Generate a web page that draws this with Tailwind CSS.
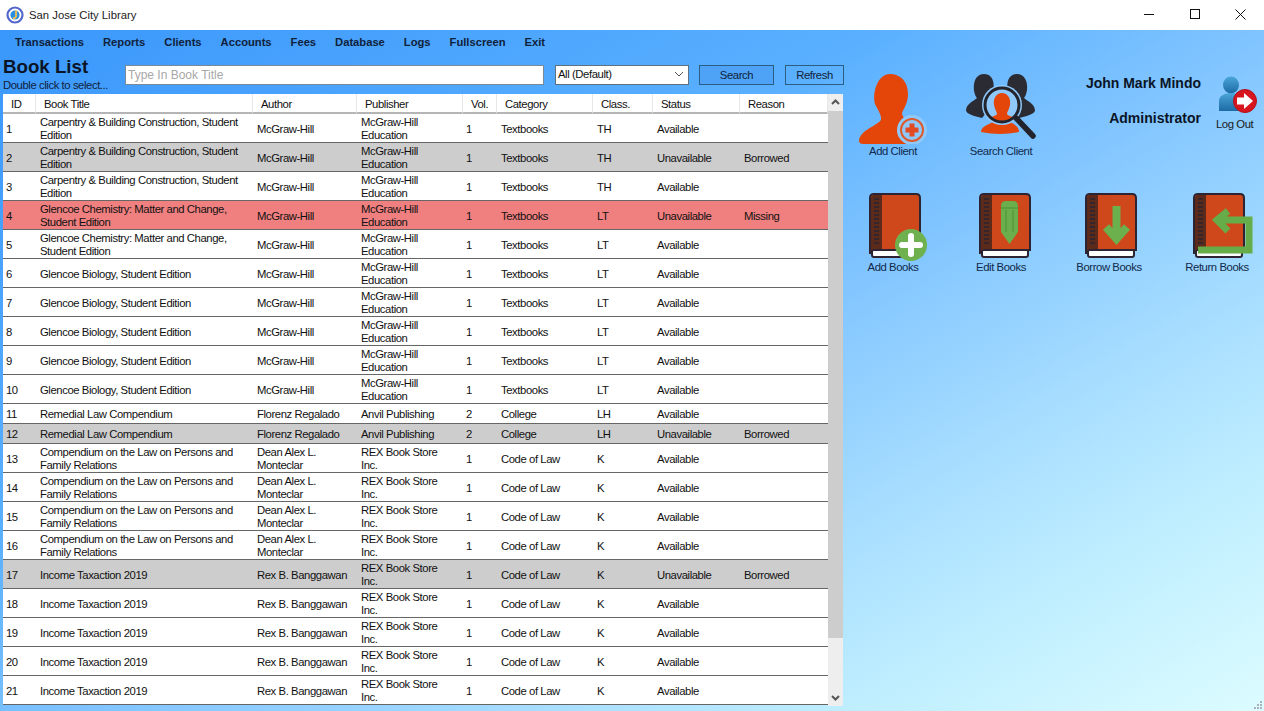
<!DOCTYPE html>
<html lang="en">
<head>
    <meta charset="UTF-8">
    <title>San Jose City Library</title>
    <script src="https://cdn.jsdelivr.net/npm/@tailwindcss/browser@4"></script>
</head>
<body class="w-[1264px] h-[711px] overflow-hidden font-['Liberation_Sans',Arial,sans-serif] text-[11.3px] tracking-[-0.42px] text-[#111]">
    <!-- shared book shape -->
    <svg class="hidden">
        <symbol id="book" viewBox="0 0 52 66" overflow="visible">
            <rect x="3" y="54" width="46" height="10" rx="2" fill="#fff" stroke="#2d2433" stroke-width="2"/>
            <path d="M5 1H47Q51 1 51 5V57H5Q1 57 1 61V5Q1 1 5 1Z" fill="#cf481c" stroke="#2d2433" stroke-width="2"/>
            <path d="M5 2H13V56H5Q2 56 2 59V5Q2 2 5 2Z" fill="#5b2a1b"/>
            <path d="M5 6H10M5 10H10M5 14H10M5 18H10M5 22H10M5 26H10M5 30H10M5 34H10M5 38H10M5 42H10M5 46H10M5 50H10" stroke="#2d2433" stroke-width="1.6"/>
        </symbol>
    </svg>

    <!-- Title bar -->
    <div class="h-[30px] bg-white flex items-center">
        <svg width="18" height="18" viewBox="0 0 18 18" class="ml-[6px]">
            <circle cx="9" cy="9" r="7.5" fill="#fff" stroke="#5566cc" stroke-width="2.2"/>
            <circle cx="9" cy="9" r="4.6" fill="#2a8fe0"/>
            <path d="M10 4.5V10.5Q9.5 12.5 7 12" fill="none" stroke="#f2c14e" stroke-width="1.8"/>
        </svg>
        <span class="ml-[5px] text-[11.3px] tracking-normal text-[#222]">San Jose City Library</span>
        <div class="ml-auto flex items-center">
            <svg width="46" height="30" viewBox="0 0 46 30"><path d="M21 14.5H31" stroke="#111"/></svg>
            <svg width="46" height="30" viewBox="0 0 46 30"><rect x="21.5" y="9.500" width="9" height="9" fill="none" stroke="#111"/></svg>
            <svg width="46" height="30" viewBox="0 0 46 30" class="mr-[3px]"><path d="M20.5 9.5L30.5 19.5M30.5 9.5L20.5 19.5" stroke="#111"/></svg>
        </div>
    </div>

    <!-- Main form -->
    <div class="relative h-[681px] bg-[linear-gradient(150deg,#3a97fb_0%,#5ab0ff_36%,#80c4ff_52%,#a5dcff_69%,#bfeeff_83%,#dcfcff_100%)]">
        <!-- Menu -->
        <nav class="h-[24px] pl-[15px] flex items-center gap-[19px] font-bold text-[11.2px] tracking-normal text-[#10213a]">
            <span>Transactions</span>
            <span>Reports</span>
            <span>Clients</span>
            <span>Accounts</span>
            <span>Fees</span>
            <span>Database</span>
            <span>Logs</span>
            <span>Fullscreen</span>
            <span>Exit</span>
        </nav>

        <div class="flex">
            <!-- Left: book list -->
            <div class="w-[844px] shrink-0">
                <div class="h-[40px] flex pl-[3px]">
                    <div class="w-[122px] shrink-0">
                        <h1 class="text-[18.7px] tracking-normal leading-[23px] mt-[1px] font-bold text-[#0a1426]">Book List</h1>
                        <p class="leading-[13px] mt-[1px] text-[#10213a] whitespace-nowrap">Double click to select...</p>
                    </div>
                    <input type="text" placeholder="Type In Book Title" class="mt-[11px] w-[419px] h-[20px] bg-white border border-[#7a8a99] px-[2px] text-[12px] tracking-normal placeholder:text-[#a8a8a8]">
                    <div class="mt-[11px] ml-[11px] w-[134px] h-[20px] bg-white border border-[#5f7080] pl-[2px] pr-[4px] pb-[2px] flex items-center justify-between">
                        <span>All (Default)</span>
                        <svg width="10" height="6" viewBox="0 0 10 6"><path d="M1 1L5 5L9 1" fill="none" stroke="#555"/></svg>
                    </div>
                    <button class="mt-[11px] ml-[10px] w-[75px] h-[20px] bg-[#4ea3f7] border border-[#2c5d85] text-[#10213a]">Search</button>
                    <button class="mt-[11px] ml-[11px] w-[59px] h-[20px] border border-[#2c5d85] text-[#10213a]">Refresh</button>
                </div>

                <div class="flex h-[612px] pl-[3px]">
                    <table class="w-[825px] h-fit table-fixed border-separate border-spacing-0 bg-white leading-[13px] [&_td]:pl-1 [&_td]:pt-px [&_td:not(:has(br))]:pt-[3px] [&_td]:border-b [&_td]:border-[#666] [&_th]:font-normal [&_th]:text-left [&_th]:pt-[2px] [&_th]:border-b-2 [&_th]:border-[#b5b5b5] [&_th]:border-r [&_th]:border-r-[#e8e8e8] [&_th]:pl-2 [&_tbody_tr]:h-[29px]">
                        <colgroup>
                            <col class="w-[33px]"><col class="w-[217px]"><col class="w-[104px]"><col class="w-[106px]"><col class="w-[34px]"><col class="w-[96px]"><col class="w-[60px]"><col class="w-[87px]"><col class="w-[88px]">
                        </colgroup>
                        <thead>
                            <tr class="h-[20px]">
                                <th>ID</th><th>Book Title</th><th>Author</th><th>Publisher</th><th>Vol.</th><th>Category</th><th>Class.</th><th>Status</th><th>Reason</th>
                            </tr>
                        </thead>
                        <tbody class="[&_td:nth-child(1)]:pl-[3px] [&_td:nth-child(5)]:pl-[3px]">
                            <tr><td>1</td><td>Carpentry &amp; Building Construction, Student<br>Edition</td><td>McGraw-Hill</td><td>McGraw-Hill<br>Education</td><td>1</td><td>Textbooks</td><td>TH</td><td>Available</td><td></td></tr>
                            <tr class="bg-[#cdcdcd]"><td>2</td><td>Carpentry &amp; Building Construction, Student<br>Edition</td><td>McGraw-Hill</td><td>McGraw-Hill<br>Education</td><td>1</td><td>Textbooks</td><td>TH</td><td>Unavailable</td><td>Borrowed</td></tr>
                            <tr><td>3</td><td>Carpentry &amp; Building Construction, Student<br>Edition</td><td>McGraw-Hill</td><td>McGraw-Hill<br>Education</td><td>1</td><td>Textbooks</td><td>TH</td><td>Available</td><td></td></tr>
                            <tr class="bg-[#f08080]"><td>4</td><td>Glencoe Chemistry: Matter and Change,<br>Student Edition</td><td>McGraw-Hill</td><td>McGraw-Hill<br>Education</td><td>1</td><td>Textbooks</td><td>LT</td><td>Unavailable</td><td>Missing</td></tr>
                            <tr><td>5</td><td>Glencoe Chemistry: Matter and Change,<br>Student Edition</td><td>McGraw-Hill</td><td>McGraw-Hill<br>Education</td><td>1</td><td>Textbooks</td><td>LT</td><td>Available</td><td></td></tr>
                            <tr><td>6</td><td>Glencoe Biology, Student Edition</td><td>McGraw-Hill</td><td>McGraw-Hill<br>Education</td><td>1</td><td>Textbooks</td><td>LT</td><td>Available</td><td></td></tr>
                            <tr><td>7</td><td>Glencoe Biology, Student Edition</td><td>McGraw-Hill</td><td>McGraw-Hill<br>Education</td><td>1</td><td>Textbooks</td><td>LT</td><td>Available</td><td></td></tr>
                            <tr><td>8</td><td>Glencoe Biology, Student Edition</td><td>McGraw-Hill</td><td>McGraw-Hill<br>Education</td><td>1</td><td>Textbooks</td><td>LT</td><td>Available</td><td></td></tr>
                            <tr><td>9</td><td>Glencoe Biology, Student Edition</td><td>McGraw-Hill</td><td>McGraw-Hill<br>Education</td><td>1</td><td>Textbooks</td><td>LT</td><td>Available</td><td></td></tr>
                            <tr><td>10</td><td>Glencoe Biology, Student Edition</td><td>McGraw-Hill</td><td>McGraw-Hill<br>Education</td><td>1</td><td>Textbooks</td><td>LT</td><td>Available</td><td></td></tr>
                            <tr class="!h-[20px] [&_td]:!pt-px"><td>11</td><td>Remedial Law Compendium</td><td>Florenz Regalado</td><td>Anvil Publishing</td><td>2</td><td>College</td><td>LH</td><td>Available</td><td></td></tr>
                            <tr class="!h-[20px] [&_td]:!pt-px bg-[#cdcdcd]"><td>12</td><td>Remedial Law Compendium</td><td>Florenz Regalado</td><td>Anvil Publishing</td><td>2</td><td>College</td><td>LH</td><td>Unavailable</td><td>Borrowed</td></tr>
                            <tr><td>13</td><td>Compendium on the Law on Persons and<br>Family Relations</td><td>Dean Alex L.<br>Monteclar</td><td>REX Book Store<br>Inc.</td><td>1</td><td>Code of Law</td><td>K</td><td>Available</td><td></td></tr>
                            <tr><td>14</td><td>Compendium on the Law on Persons and<br>Family Relations</td><td>Dean Alex L.<br>Monteclar</td><td>REX Book Store<br>Inc.</td><td>1</td><td>Code of Law</td><td>K</td><td>Available</td><td></td></tr>
                            <tr><td>15</td><td>Compendium on the Law on Persons and<br>Family Relations</td><td>Dean Alex L.<br>Monteclar</td><td>REX Book Store<br>Inc.</td><td>1</td><td>Code of Law</td><td>K</td><td>Available</td><td></td></tr>
                            <tr><td>16</td><td>Compendium on the Law on Persons and<br>Family Relations</td><td>Dean Alex L.<br>Monteclar</td><td>REX Book Store<br>Inc.</td><td>1</td><td>Code of Law</td><td>K</td><td>Available</td><td></td></tr>
                            <tr class="bg-[#cdcdcd]"><td>17</td><td>Income Taxaction 2019</td><td>Rex B. Banggawan</td><td>REX Book Store<br>Inc.</td><td>1</td><td>Code of Law</td><td>K</td><td>Unavailable</td><td>Borrowed</td></tr>
                            <tr><td>18</td><td>Income Taxaction 2019</td><td>Rex B. Banggawan</td><td>REX Book Store<br>Inc.</td><td>1</td><td>Code of Law</td><td>K</td><td>Available</td><td></td></tr>
                            <tr><td>19</td><td>Income Taxaction 2019</td><td>Rex B. Banggawan</td><td>REX Book Store<br>Inc.</td><td>1</td><td>Code of Law</td><td>K</td><td>Available</td><td></td></tr>
                            <tr><td>20</td><td>Income Taxaction 2019</td><td>Rex B. Banggawan</td><td>REX Book Store<br>Inc.</td><td>1</td><td>Code of Law</td><td>K</td><td>Available</td><td></td></tr>
                            <tr><td>21</td><td>Income Taxaction 2019</td><td>Rex B. Banggawan</td><td>REX Book Store<br>Inc.</td><td>1</td><td>Code of Law</td><td>K</td><td>Available</td><td></td></tr>
                        </tbody>
                    </table>
                    <!-- Scrollbar -->
                    <div class="w-[15px] h-[612px] bg-[#eeeeee] flex flex-col items-center">
                        <svg width="15" height="17" viewBox="0 0 15 17"><path d="M4 10L7.5 6.5L11 10" fill="none" stroke="#555" stroke-width="2"/></svg>
                        <div class="w-full h-[527px] bg-[#cdcdcd]"></div>
                        <svg width="15" height="17" viewBox="0 0 15 17" class="mt-auto"><path d="M4 7L7.5 10.5L11 7" fill="none" stroke="#555" stroke-width="2"/></svg>
                    </div>
                </div>
            </div>

            <!-- Right: actions -->
            <div class="flex-1 pl-[3px] text-[#10294a] text-center">
                <div class="flex gap-4 pt-[18px]">
                    <div class="w-[92px] flex flex-col items-center">
                        <svg width="72" height="72" viewBox="0 0 72 72">
                            <path d="M33 2C44 2 51 10 51 22C51 31 47 36 45 41C45 47 52 49 60 53L60 72H6C2 72 1 69 3 65C7 57 19 54 24 48C25 44 21 38 18 32C15 20 21 2 33 2Z" fill="#e4460a"/>
                            <circle cx="55" cy="58" r="15" fill="#8fc9fb"/>
                            <circle cx="55" cy="58" r="11" fill="none" stroke="#dd5a2c" stroke-width="2"/>
                            <path d="M55 51.5V64.5M48.500 58H61.500" stroke="#e24a22" stroke-width="5"/>
                        </svg>
                        <span class="leading-[13px] mt-[1px]">Add Client</span>
                    </div>
                    <div class="w-[92px] flex flex-col items-center">
                        <svg width="74" height="72" viewBox="0 0 74 72">
                            <path d="M2 38C3 31 10 29 13 26C8 20 8 2 20 2C32 2 31 18 27 26L31 30L18 46C10 44 2 42 2 38Z" fill="#2b2b33"/>
                            <path d="M71 38C70 31 63 29 60 26C65 20 65 2 53 2C41 2 42 18 46 26L42 30L55 46C63 44 71 42 71 38Z" fill="#2b2b33"/>
                            <path d="M17 60C17 53 28 52 32 48H44C48 52 55 53 55 60Q36 64 17 60Z" fill="#e4460a"/>
                            <circle cx="38" cy="33" r="20" fill="#8fc9fb"/>
                            <path d="M38 21C44 21 47 27 46 33C45 38 43 40 43 42C45 45 49 44 51 46Q38 52 25 46C27 44 31 45 33 42C33 40 31 38 30 33C29 27 32 21 38 21Z" fill="#e4460a"/>
                            <circle cx="38" cy="33" r="17" fill="none" stroke="#23232b" stroke-width="3"/>
                            <path d="M52 46L69 64" stroke="#23232b" stroke-width="5.500" stroke-linecap="round"/>
                        </svg>
                        <span class="leading-[13px] mt-[1px]">Search Client</span>
                    </div>
                    <div class="w-[138px] shrink-0 text-right font-bold tracking-normal text-[#0a1426] text-[14px] leading-[16px] pt-[3px] whitespace-nowrap">
                        <p>John Mark Mindo</p>
                        <p class="mt-[19px]">Administrator</p>
                    </div>
                    <div class="flex flex-col items-start ml-[1px] pt-[4px]">
                        <svg width="40" height="38" viewBox="0 0 40 38">
                            <defs><linearGradient id="userBlue" x1="0" y1="0" x2="0" y2="1"><stop offset="0" stop-color="#4aa6d8"/><stop offset="1" stop-color="#1c6aa5"/></linearGradient></defs>
                            <ellipse cx="13" cy="9" rx="8" ry="8.500" fill="url(#userBlue)"/>
                            <path d="M1 35V25C1 20 6 17 13 17C20 17 25 20 25 25V35Z" fill="url(#userBlue)"/>
                            <circle cx="27" cy="25" r="11.500" fill="#d7151f" stroke="#b2101a"/>
                            <path d="M19 21.500H26V17L35 25L26 33V28.500H19Z" fill="#fff"/>
                        </svg>
                        <span class="leading-[13px] text-[#1a1a1a] mt-[4px] -ml-[2px] whitespace-nowrap">Log Out</span>
                    </div>
                </div>

                <div class="flex gap-4 mt-[35px]">
                    <div class="w-[92px] flex flex-col items-center">
                        <svg width="72" height="68" viewBox="-12 0 72 68" overflow="visible">
                            <use href="#book" width="52" height="66"/>
                            <circle cx="42" cy="52" r="16" fill="#6fb14e"/>
                            <path d="M42 43V61M33 52H51" stroke="#fff" stroke-width="6" stroke-linecap="round"/>
                        </svg>
                        <span class="leading-[13px]">Add Books</span>
                    </div>
                    <div class="w-[92px] flex flex-col items-center">
                        <svg width="72" height="68" viewBox="-14 0 72 68" overflow="visible">
                            <use href="#book" width="52" height="66"/>
                            <path d="M22 13Q22 8 27 8H34Q39 8 39 13V39L30.500 51L22 39Z" fill="#6bae4c"/>
                            <path d="M22 15H39M27 17V39M34 17V39" stroke="#559a3d" stroke-width="1.500"/>
                        </svg>
                        <span class="leading-[13px]">Edit Books</span>
                    </div>
                    <div class="w-[92px] flex flex-col items-center">
                        <svg width="72" height="68" viewBox="-12 0 72 68" overflow="visible">
                            <use href="#book" width="52" height="66"/>
                            <path d="M31.500 13V44M21 34L31.500 46L42 34" fill="none" stroke="#6bb04d" stroke-width="8"/>
                        </svg>
                        <span class="leading-[13px]">Borrow Books</span>
                    </div>
                    <div class="w-[92px] flex flex-col items-center">
                        <svg width="72" height="68" viewBox="-12 0 72 68" overflow="visible">
                            <use href="#book" width="52" height="66"/>
                            <path d="M5 57H56V27H25M35 18L24 27L35 38" fill="none" stroke="#66ad4a" stroke-width="7"/>
                        </svg>
                        <span class="leading-[13px]">Return Books</span>
                    </div>
                </div>
            </div>
        </div>

        <!-- Resize grip -->
        <svg width="10" height="10" viewBox="0 0 10 10" class="absolute right-[1px] bottom-[1px]">
            <path d="M7 1h2v2h-2zM4 4h2v2h-2zM7 4h2v2h-2zM1 7h2v2h-2zM4 7h2v2h-2zM7 7h2v2h-2z" fill="#a9b4ba"/>
        </svg>
    </div>
</body>
</html>
